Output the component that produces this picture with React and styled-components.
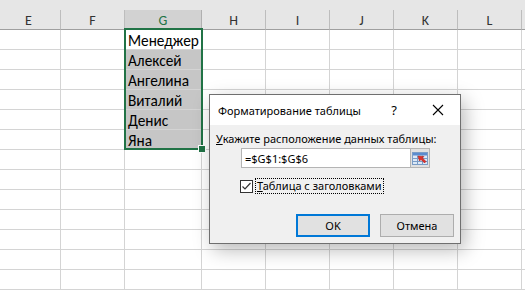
import React from 'react';
import styled, { createGlobalStyle } from 'styled-components';

const Global = createGlobalStyle`
  html, body { margin: 0; padding: 0; background: #fff; overflow: hidden; }
  #root { width: 525px; height: 291px; }
`;

const Page = styled.div`
  position: relative;
  width: 525px;
  height: 291px;
  overflow: hidden;
  background: #fff;
  font-family: Carlito, "Liberation Sans", Arial, sans-serif;
`;

const TopStrip = styled.div`
  height: 10px;
  background: #e6e6e6;
`;

const Sheet = styled.div`
  display: grid;
  grid-template-columns: 64px 64px 77px 64px 64px 64px 64px 64px 64px;
  grid-auto-rows: 20px;
  margin-left: -3px;
  width: 592px;
`;

const HeadCell = styled.div`
  box-sizing: border-box;
  background: ${p => (p.$active ? '#d2d2d2' : '#e6e6e6')};
  color: ${p => (p.$active ? '#217346' : '#333')};
  border-right: 1px solid ${p => (p.$active ? '#b0b0b0' : '#bdbdbd')};
  border-bottom: 1px solid #9f9f9f;
  display: flex;
  align-items: center;
  justify-content: center;
  font-size: 14px;
  padding-top: 1px;
`;

const Cell = styled.div`
  box-sizing: border-box;
  border-right: 1px solid #d4d4d4;
  border-bottom: 1px solid #d4d4d4;
  background: ${p => (p.$sel ? '#c6c6c6' : '#fff')};
  font-size: 15.3px;
  color: #000;
  padding-left: 3px;
  padding-top: 1px;
  display: flex;
  align-items: center;
  white-space: nowrap;
  overflow: hidden;
`;

const Selection = styled.div`
  position: absolute;
  left: 124px;
  top: 28px;
  width: 79px;
  height: 122px;
  box-sizing: border-box;
  border: 2px solid #217346;
  pointer-events: none;
`;

const Handle = styled.div`
  position: absolute;
  left: 198px;
  top: 145px;
  width: 6px;
  height: 6px;
  background: #217346;
  border: 1px solid #fff;
`;

const Dialog = styled.div`
  position: absolute;
  left: 209px;
  top: 94px;
  width: 252px;
  height: 150px;
  box-sizing: border-box;
  border: 1px solid #6f6f6f;
  background: #f0f0f0;
  box-shadow: 4px 6px 18px rgba(0, 0, 0, 0.28);
  display: flex;
  flex-direction: column;
  font-family: "Noto Sans", "Open Sans", sans-serif;
  font-size: 11px;
  color: #000;
`;

const TitleBar = styled.div`
  height: 30px;
  background: #fff;
  display: flex;
  align-items: center;
  padding-left: 8px;
`;

const Title = styled.div`
  flex: 1;
  white-space: nowrap;
`;

const TitleButton = styled.div`
  width: 44px;
  height: 30px;
  display: flex;
  align-items: center;
  justify-content: center;
  font-size: 13px;
`;

const Body = styled.div`
  flex: 1;
  padding: 6px 6px 0 6px;
  display: flex;
  flex-direction: column;
`;

const Label = styled.div`
  line-height: 16px;
  height: 16px;
  white-space: nowrap;
`;

const Key = styled.span`
  text-decoration: underline;
`;

const InputRow = styled.div`
  margin-top: 1px;
  margin-left: 25px;
  display: flex;
  height: 20px;
`;

const Input = styled.div`
  box-sizing: border-box;
  width: 169px;
  height: 20px;
  background: #fff;
  border: 1px solid #b4b4b4;
  border-right: none;
  padding-left: 3px;
  display: flex;
  align-items: center;
`;

const RangeButton = styled.div`
  box-sizing: border-box;
  width: 20px;
  height: 20px;
  background: #e1e1e1;
  border: 1px solid #b4b4b4;
  display: flex;
  align-items: center;
  justify-content: center;
`;

const CheckRow = styled.div`
  margin-top: 10px;
  margin-left: 24px;
  display: flex;
  align-items: center;
  height: 16px;
`;

const Box = styled.div`
  box-sizing: border-box;
  width: 13px;
  height: 13px;
  border: 1px solid #333;
  background: #fff;
  display: flex;
  align-items: center;
  justify-content: center;
`;

const Focus = styled.div`
  margin-left: 2px;
  border: 1px dotted #000;
  padding: 0 1px;
  line-height: 14px;
  white-space: nowrap;
`;

const ButtonRow = styled.div`
  margin-top: 20px;
  display: flex;
  justify-content: flex-end;
  gap: 10px;
`;

const Button = styled.div`
  box-sizing: border-box;
  width: 74px;
  height: 23px;
  background: #e1e1e1;
  border: ${p => (p.$default ? '2px solid #0078d7' : '1px solid #adadad')};
  display: flex;
  align-items: center;
  justify-content: center;
`;

const cols = ['E', 'F', 'G', 'H', 'I', 'J', 'K', 'L', ''];
const names = ['Менеджер', 'Алексей', 'Ангелина', 'Виталий', 'Денис', 'Яна'];

export default function App() {
  const rows = [];
  for (let r = 0; r < 13; r++) {
    cols.forEach((c, i) => {
      const isG = c === 'G';
      const text = isG && r < names.length ? names[r] : '';
      rows.push(
        <Cell key={`${r}-${i}`} $sel={isG && r >= 1 && r < 6}>
          {text}
        </Cell>
      );
    });
  }
  return (
    <Page>
      <Global />
      <TopStrip />
      <Sheet>
        {cols.map((c, i) => (
          <HeadCell key={i} $active={c === 'G'}>{c}</HeadCell>
        ))}
        {rows}
      </Sheet>
      <Selection />
      <Handle />
      <Dialog>
        <TitleBar>
          <Title>Форматирование таблицы</Title>
          <TitleButton>?</TitleButton>
          <TitleButton>
            <svg width="12" height="12" viewBox="0 0 12 12">
              <path d="M1 1L11 11M11 1L1 11" stroke="#000" strokeWidth="1.1" />
            </svg>
          </TitleButton>
        </TitleBar>
        <Body>
          <Label><Key>У</Key>кажите расположение данных таблицы:</Label>
          <InputRow>
            <Input>=$G$1:$G$6</Input>
            <RangeButton>
              <svg width="16" height="13" viewBox="0 0 16 13">
                <rect x="0.5" y="0.5" width="15" height="12" fill="#dce8f6" stroke="#7a9cc6" />
                <rect x="1" y="1" width="14" height="2.5" fill="#5b8ccf" />
                <path d="M1 6.5H15M1 9.5H15M5.5 3.5V12.5M10.5 3.5V12.5" stroke="#7a9cc6" strokeWidth="1" />
                <path d="M6 4L12 4.5L10.5 6L14 9.5L12.5 11L9 7.5L7.5 9Z" fill="#e0302a" stroke="#a01810" strokeWidth="0.5" />
              </svg>
            </RangeButton>
          </InputRow>
          <CheckRow>
            <Box>
              <svg width="11" height="11" viewBox="0 0 11 11">
                <path d="M1.5 5.5L4 8L9.5 2" fill="none" stroke="#333" strokeWidth="1.2" />
              </svg>
            </Box>
            <Focus><Key>Т</Key>аблица с заголовками</Focus>
          </CheckRow>
          <ButtonRow>
            <Button $default>OK</Button>
            <Button>Отмена</Button>
          </ButtonRow>
        </Body>
      </Dialog>
    </Page>
  );
}
